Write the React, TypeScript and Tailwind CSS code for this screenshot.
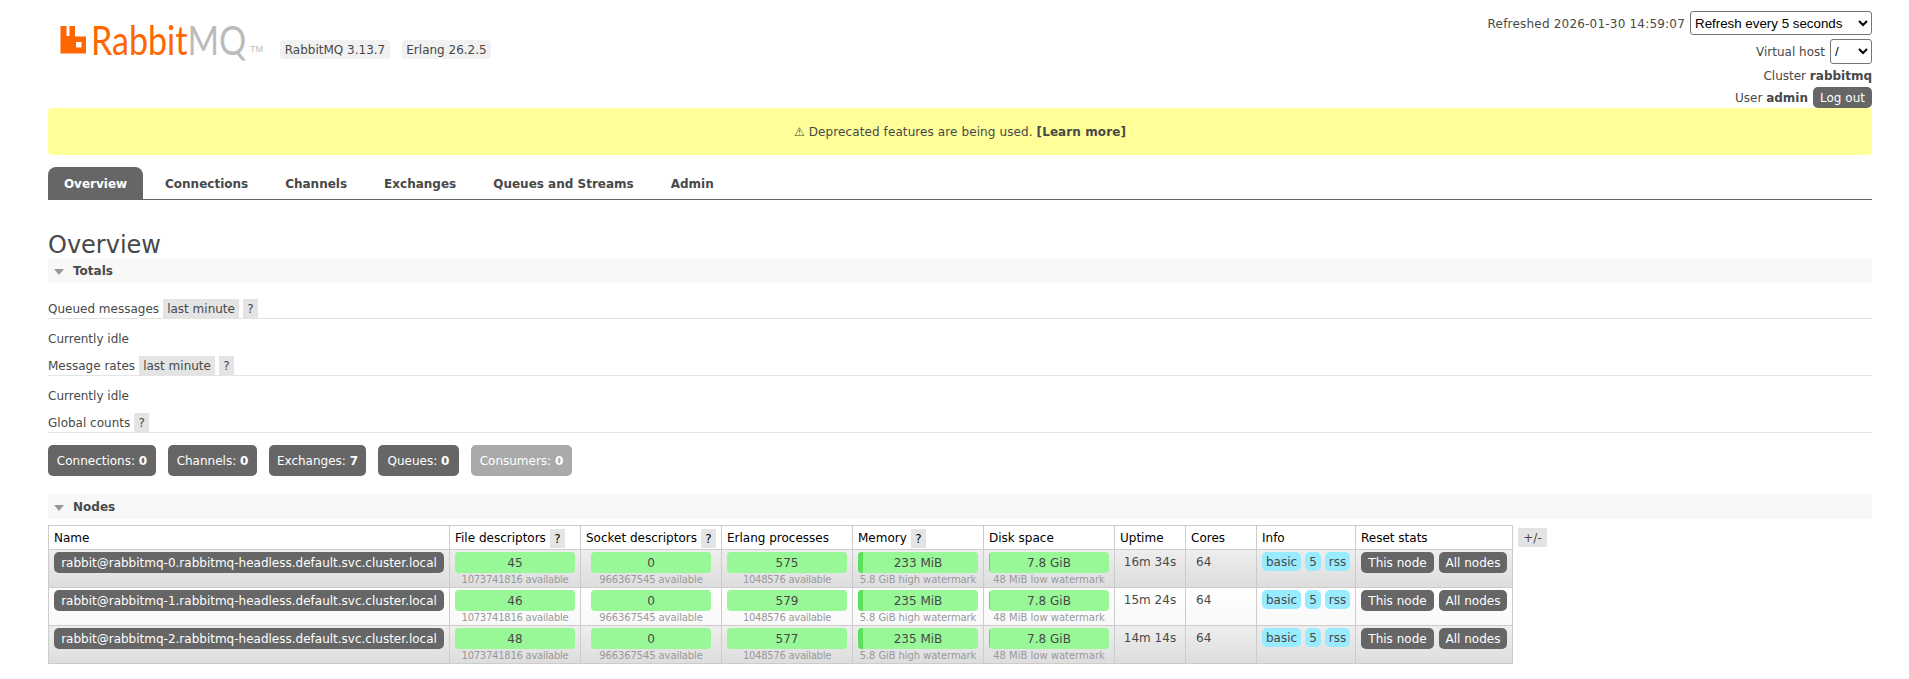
import React from "react";

const nodes = [
  { name: "rabbit@rabbitmq-0.rabbitmq-headless.default.svc.cluster.local", fd: "45", proc: "575", mem: "233 MiB", up: "16m 34s", row: "bg-gradient-to-b from-[#eeeeee] to-[#dddddd]" },
  { name: "rabbit@rabbitmq-1.rabbitmq-headless.default.svc.cluster.local", fd: "46", proc: "579", mem: "235 MiB", up: "15m 24s", row: "bg-gradient-to-b from-[#ffffff] to-[#f8f8f8]" },
  { name: "rabbit@rabbitmq-2.rabbitmq-headless.default.svc.cluster.local", fd: "48", proc: "577", mem: "235 MiB", up: "14m 14s", row: "bg-gradient-to-b from-[#eeeeee] to-[#dddddd]" },
];

function Help({ className = "" }: { className?: string }) {
  return <span className={"flex h-[19px] w-[15px] items-center justify-center bg-[#e4e4e4] pt-[2px] " + className}>?</span>;
}

function Caption({ label, range }: { label: string; range?: boolean }) {
  return (
    <div className="flex h-[20px] items-center border-b border-[#e4e4e4]">
      <span className="pt-[2px]">{label}</span>
      {range && <span className="ml-[4px] flex h-[19px] w-[76px] items-center justify-center bg-[#e4e4e4] pt-[2px]">last minute</span>}
      <Help className="ml-[4px]" />
    </div>
  );
}

function SectionHead({ title }: { title: string }) {
  return (
    <div className="flex h-[25px] items-center bg-[#f8f8f8] pl-[6px] pt-[2px]">
      <span className="h-0 w-0 border-x-[5.5px] border-t-[6px] border-x-transparent border-t-[#999999]" />
      <span className="ml-[9px] font-bold">{title}</span>
    </div>
  );
}

function Pill({ label, value, dim, className = "" }: { label: string; value: string; dim?: boolean; className?: string }) {
  return (
    <span className={"flex h-[31px] items-center justify-center rounded-[5px] pt-[2px] text-white " + (dim ? "bg-[#aaaaaa] " : "bg-[#666666] ") + className}>
      {label}:&nbsp;<b>{value}</b>
    </span>
  );
}

function Bar({ value, sub, used, subClass = "" }: { value: string; sub: string; used?: string; subClass?: string }) {
  return (
    <div className="flex flex-col items-center">
      <div className="relative flex h-[21px] w-[120px] items-center justify-center overflow-hidden rounded-[4px] bg-[#98f898] pt-[2px]">
        {used && <span className={"absolute bottom-0 left-0 top-0 bg-[#5ddf5d] " + used} />}
        <span className="relative">{value}</span>
      </div>
      <div className={"mt-[1px] whitespace-nowrap text-[10px] leading-[12px] text-[#999999] " + subClass}>{sub}</div>
    </div>
  );
}

function Btn({ children, className = "" }: { children: React.ReactNode; className?: string }) {
  return <span className={"flex h-[21px] items-center justify-center rounded-[5px] bg-[#666666] pt-[2px] text-white " + className}>{children}</span>;
}

function Chip({ children, className = "" }: { children: React.ReactNode; className?: string }) {
  return <span className={"flex h-[19px] items-center justify-center rounded-[5px] bg-[#99ebff] pt-[2px] " + className}>{children}</span>;
}

const th = "border border-[#cccccc] px-[5px] pt-[2px] text-left font-normal text-black";
const td = "border border-[#cccccc] px-[5px] pt-[2px] align-top";

export default function App() {
  return (
    <div className="min-h-[679px] bg-white pl-[48px] pr-[37px] font-['DejaVu_Sans',Verdana,sans-serif] text-[12px] leading-[19px] text-[#484848]">
      <header className="flex h-[108px] justify-between">
        <div className="flex items-start pl-[12px] pt-[25px]">
          <svg width="26" height="29" viewBox="0 0 26 29" className="shrink-0">
            <path fillRule="evenodd" fill="#ff6600" d="M0.5 1H6.5V11H9.5V1H15V11.5H26V28.5H0.5ZM16 17V22.5H21.5V17Z" />
          </svg>
          <div className="ml-[5px] h-[29px] w-[156px]">
            <div className="flex h-[29px] origin-left scale-x-[0.83] items-center whitespace-nowrap font-['Lato',sans-serif] text-[41px] font-normal leading-[29px]">
              <span className="text-[#ff6600]">Rabbit</span>
              <span className="text-[#bbbbbb]">MQ</span>
            </div>
          </div>
          <span className="ml-[3px] mt-[19px] w-[14px] font-['Liberation_Sans',sans-serif] text-[9px] leading-[10px] text-[#bbbbbb]">TM</span>
          <span className="ml-[16px] mt-[15px] flex h-[19px] w-[110px] items-center justify-center rounded-[4px] bg-[#f1f1f1] pt-[2px]">RabbitMQ 3.13.7</span>
          <span className="ml-[12px] mt-[15px] flex h-[19px] w-[89px] items-center justify-center rounded-[4px] bg-[#f1f1f1] pt-[2px]">Erlang 26.2.5</span>
        </div>
        <div className="flex flex-col items-end pt-[11px]">
          <div className="flex h-[24px] items-center">
            <span className="mr-[5px] pt-[2px] tracking-[0.2px]">Refreshed 2026-01-30 14:59:07</span>
            <select className="h-[24px] w-[182px] rounded-[3px] border border-[#767676] bg-white font-['Liberation_Sans',sans-serif] text-[13.33px] text-black" defaultValue="5">
              <option value="5">Refresh every 5 seconds</option>
            </select>
          </div>
          <div className="mt-[4px] flex h-[25px] items-center">
            <span className="mr-[5px] pt-[2px]">Virtual host</span>
            <select className="h-[25px] w-[42px] rounded-[3px] border border-[#767676] bg-white font-['Liberation_Sans',sans-serif] text-[13.33px] text-black" defaultValue="/">
              <option value="/">/</option>
            </select>
          </div>
          <div className="mt-[1px] flex h-[21px] items-center pt-[2px]">
            <span>Cluster&nbsp;<b>rabbitmq</b></span>
          </div>
          <div className="flex h-[23px] items-center">
            <span className="mr-[5px] pt-[2px]">User&nbsp;<b>admin</b></span>
            <Btn className="w-[59px] self-end">Log out</Btn>
          </div>
        </div>
      </header>

      <div className="flex h-[47px] items-center justify-center rounded-[4px] bg-[#ffff99] pt-[2px] tracking-[0.1px]">
        <span>⚠ Deprecated features are being used. <b>[Learn more]</b></span>
      </div>

      <nav className="mt-[12px] flex h-[33px] gap-[7px] border-b border-[#666666] font-bold">
        <span className="flex h-[32px] w-[95px] items-center justify-center rounded-t-[8px] bg-[#666666] pt-[2px] text-white">Overview</span>
        {["Connections", "Channels", "Exchanges", "Queues and Streams", "Admin"].map((t) => (
          <span key={t} className="flex h-[32px] items-center px-[15px] pt-[2px]">{t}</span>
        ))}
      </nav>

      <h1 className="mt-[31px] h-[27px] text-[24px] font-normal leading-[28px]">Overview</h1>

      <SectionHead title="Totals" />
      <div className="mt-[16px]">
        <Caption label="Queued messages" range />
        <div className="flex h-[37px] items-center pt-[4px]">Currently idle</div>
        <Caption label="Message rates" range />
        <div className="flex h-[37px] items-center pt-[4px]">Currently idle</div>
        <Caption label="Global counts" />
      </div>
      <div className="mt-[12px] flex gap-[12px]">
        <Pill label="Connections" value="0" className="w-[108px]" />
        <Pill label="Channels" value="0" className="w-[89px]" />
        <Pill label="Exchanges" value="7" className="w-[97px]" />
        <Pill label="Queues" value="0" className="w-[81px]" />
        <Pill label="Consumers" value="0" dim className="w-[101px]" />
      </div>

      <div className="mt-[18px]">
        <SectionHead title="Nodes" />
      </div>
      <div className="mt-[6px] flex items-start">
        <table className="w-[1465px] table-fixed border-collapse">
          <colgroup>
            <col className="w-[401px]" />
            <col className="w-[131px]" />
            <col className="w-[141px]" />
            <col className="w-[131px]" />
            <col className="w-[131px]" />
            <col className="w-[131px]" />
            <col className="w-[71px]" />
            <col className="w-[71px]" />
            <col className="w-[99px]" />
            <col className="w-[157px]" />
          </colgroup>
          <thead>
            <tr className="h-[24px]">
              <th className={th}>Name</th>
              <th className={th}><span className="flex items-center gap-[4px]">File descriptors <Help /></span></th>
              <th className={th}><span className="flex items-center gap-[4px]">Socket descriptors <Help /></span></th>
              <th className={th}>Erlang processes</th>
              <th className={th}><span className="flex items-center gap-[4px]">Memory <Help /></span></th>
              <th className={th}>Disk space</th>
              <th className={th}>Uptime</th>
              <th className={th}>Cores</th>
              <th className={th}>Info</th>
              <th className={th}>Reset stats</th>
            </tr>
          </thead>
          <tbody>
            {nodes.map((n) => (
              <tr key={n.name} className={"h-[38px] " + n.row}>
                <td className={td}>
                  <Btn className="whitespace-nowrap">{n.name}</Btn>
                </td>
                <td className={td}><Bar value={n.fd} sub="1073741816 available" subClass="tracking-[-0.25px]" /></td>
                <td className={td}><Bar value="0" sub="966367545 available" subClass="tracking-[-0.1px]" /></td>
                <td className={td}><Bar value={n.proc} sub="1048576 available" subClass="tracking-[-0.28px]" /></td>
                <td className={td}><Bar value={n.mem} sub="5.8 GiB high watermark" used="w-[5px]" subClass="tracking-[-0.1px]" /></td>
                <td className={td}><Bar value="7.8 GiB" sub="48 MiB low watermark" used="w-[1px]" /></td>
                <td className={td + " pt-[3px] text-center"}>{n.up}</td>
                <td className={td + " pl-[10px] pt-[3px]"}>64</td>
                <td className={td}>
                  <div className="flex gap-[4px]">
                    <Chip className="w-[39px]">basic</Chip>
                    <Chip className="w-[16px]">5</Chip>
                    <Chip className="w-[25px]">rss</Chip>
                  </div>
                </td>
                <td className={td}>
                  <div className="flex gap-[5px]">
                    <Btn className="w-[73px]">This node</Btn>
                    <Btn className="w-[68px]">All nodes</Btn>
                  </div>
                </td>
              </tr>
            ))}
          </tbody>
        </table>
        <span className="ml-[5px] mt-[3px] flex h-[19px] w-[29px] items-center justify-center bg-[#e4e4e4] pt-[2px]">+/-</span>
      </div>
    </div>
  );
}
